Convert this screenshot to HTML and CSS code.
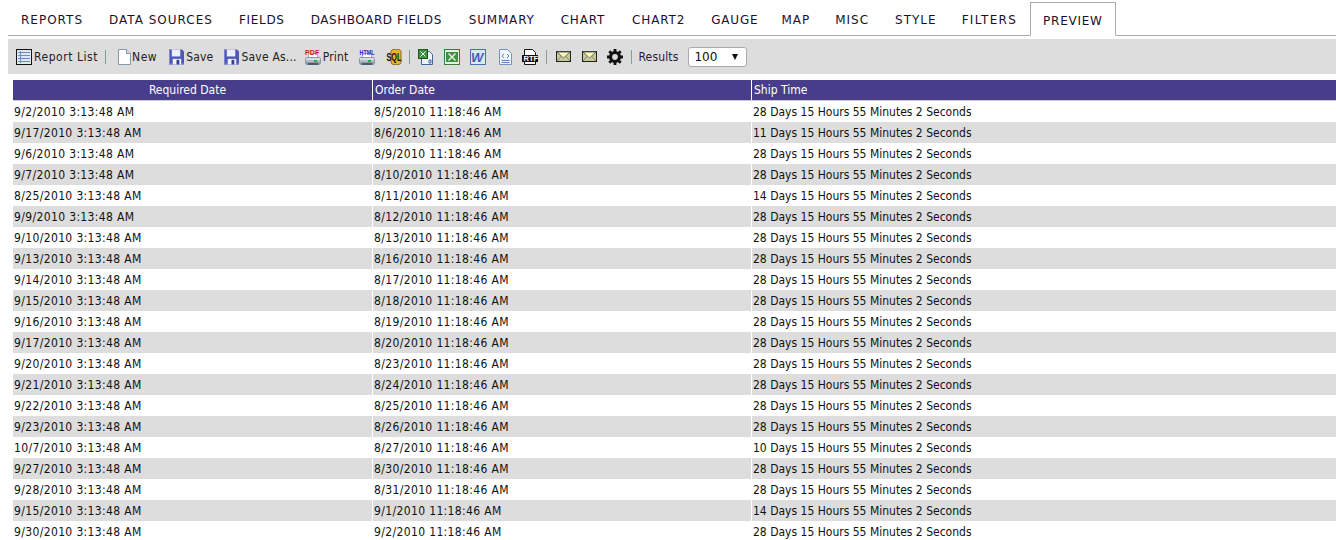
FILE: index.html
```html
<!DOCTYPE html>
<html lang="en">
<head>
<meta charset="UTF-8">
<title>Report Preview</title>
<link rel="stylesheet" href="styles.css">
</head>
<body>
<svg class="defs" width="0" height="0">
  <symbol id="floppy" viewBox="0 0 16 16">
    <path d="M0 0h14l2 2v14H0z" fill="#5058b8"/>
    <path d="M0 0h1v16H0zM0 15h16v1H0z" fill="#7f86d8"/>
    <rect x="3" y="0" width="9" height="7" fill="#eeeef8"/>
    <rect x="3" y="7" width="9" height="1" fill="#9a9ed8"/>
    <rect x="4" y="10" width="9" height="6" fill="#f2f2f2"/>
    <rect x="8" y="11" width="3" height="5" fill="#383e94"/>
  </symbol>
  <symbol id="printer" viewBox="0 0 16 12">
    <rect x="3.500" y=".5" width="9" height="4" fill="#fff" stroke="#a0aab4"/>
    <path d="M1 4h14l1 2v4l-1 2H1l-1-2V6z" fill="#8c99a6"/>
    <rect x="1" y="5" width="14" height="2" fill="#d5dce2"/>
    <rect x="1" y="7" width="14" height="2" fill="#b4bec8"/>
    <rect x="3" y="10" width="10" height="2" fill="#4e5c6a"/>
    <rect x="9" y="7" width="3" height="2" fill="#1fb14a"/>
  </symbol>
  <symbol id="mail" viewBox="0 0 15 11">
    <rect x=".5" y=".5" width="14" height="10" fill="#c9c99a" stroke="#222"/>
    <path d="M1 1l6.500 6L14 1z" fill="#fbfbb8" stroke="#666"/>
    <path d="M1 10l4.500-5M14 10L9.500 5" fill="none" stroke="#8a8a70"/>
  </symbol>
</svg>

<ul class="tabs">
  <li>Reports</li>
  <li>Data Sources</li>
  <li class="tab-fields">Fields</li>
  <li class="tab-dashboard">Dashboard Fields</li>
  <li class="tab-tight">Summary</li>
  <li class="tab-chart">Chart</li>
  <li class="tab-chart2">Chart2</li>
  <li class="tab-gauge">Gauge</li>
  <li class="tab-map">Map</li>
  <li>Misc</li>
  <li class="tab-style">Style</li>
  <li class="tab-filters">Filters</li>
  <li class="active">Preview</li>
</ul>

<div class="toolbar">
  <a class="tool tool-list">
    <svg class="icon" width="16" height="16" viewBox="0 0 16 16">
      <rect x=".5" y=".5" width="15" height="15" fill="#dfe7f2" stroke="#111"/>
      <path d="M2 3.500h12M2 6.500h12M2 9.500h12M2 12.500h12" stroke="#6c8ebf"/>
      <path d="M4.500 2v12" stroke="#6c8ebf"/>
    </svg>Report List</a>
  <span class="sep sep-list"></span>
  <a class="tool tool-new">
    <svg class="icon" width="13" height="16" viewBox="0 0 13 16">
      <path d="M.5.500h8l4 4v11H.5z" fill="#fff" stroke="#8a97aa"/>
      <path d="M8.500.5v4h4" fill="#d5dce8" stroke="#8a97aa"/>
    </svg>New</a>
  <a class="tool tool-save"><svg class="icon" width="15" height="16"><use href="#floppy"/></svg>Save</a>
  <a class="tool tool-saveas"><svg class="icon" width="15" height="16"><use href="#floppy"/></svg>Save As...</a>
  <a class="tool tool-print">
    <svg class="icon" width="16" height="17" viewBox="0 0 16 17">
      <use href="#printer" y="5" width="16" height="12"/>
      <text transform="translate(0 6.500)" class="mini mini-pdf">PDF</text>
    </svg>Print</a>
  <svg class="icon icon-html" width="16" height="17" viewBox="0 0 16 17">
    <use href="#printer" y="5" width="16" height="12"/>
    <text transform="translate(.5 6.500) scale(.77 1)" class="mini mini-html">HTML</text>
  </svg>
  <svg class="icon icon-sql" width="16" height="16" viewBox="0 0 16 16">
    <path d="M5 2.500c0-3 10-3 10 0v11c0 3-10 3-10 0z" fill="#eab52e" stroke="#8a6412"/>
    <text transform="translate(.5 12) scale(.72 1)" class="mini mini-sql">SQL</text>
  </svg>
  <span class="sep sep-sql"></span>
  <svg class="icon icon-xls" width="16" height="16" viewBox="0 0 16 16">
    <path d="M3.500 2.500h8l3 3v10h-11z" fill="#eef3fa" stroke="#43649a"/>
    <rect x=".5" y=".5" width="9" height="9" fill="#3f9142" stroke="#1d5a20"/>
    <path d="M2.500 2.500l5 5M7.500 2.500l-5 5" stroke="#fff"/>
    <path d="M11 11h2v3h-2z" fill="none" stroke="#43649a"/>
  </svg>
  <svg class="icon icon-excel" width="16" height="16" viewBox="0 0 16 16">
    <rect x=".5" y=".5" width="15" height="15" fill="#e6f0e4" stroke="#3d7a3d"/>
    <rect x="2" y="3" width="12" height="10" fill="#3f9142"/>
    <path d="M4.500 4.500l7 7M11.500 4.500l-7 7" stroke="#e6f0e4" stroke-width="1.500"/>
  </svg>
  <svg class="icon icon-word" width="16" height="16" viewBox="0 0 16 16">
    <rect x=".5" y=".5" width="15" height="15" fill="#dce6f6" stroke="#4a6fb5"/>
    <text x="1" y="13" class="mini mini-word">W</text>
  </svg>
  <svg class="icon icon-doc" width="13" height="16" viewBox="0 0 13 16">
    <path d="M.5.500h8l4 4v11H.5z" fill="#f2f6fc" stroke="#7a93bd"/>
    <path d="M5 5L3 7l2 2M8 5l2 2-2 2M2.500 11.500h8M2.500 13.500h8" fill="none" stroke="#5b82c0"/>
  </svg>
  <svg class="icon icon-rtf" width="16" height="16" viewBox="0 0 16 16">
    <path d="M2.500.5h8l3 3v3h-11z" fill="#fff" stroke="#111"/>
    <rect x="0" y="6" width="16" height="7" fill="#111"/>
    <path d="M2.500 13v2.500h11V13" fill="#fff" stroke="#111"/>
    <text x="1.500" y="12.300" class="mini mini-rtf">RTF</text>
  </svg>
  <span class="sep sep-rtf"></span>
  <svg class="icon icon-mail" width="15" height="11"><use href="#mail"/></svg>
  <svg class="icon icon-mail2" width="15" height="11"><use href="#mail"/></svg>
  <svg class="icon icon-gear" width="16" height="16" viewBox="0 0 16 16">
    <path d="M8 3.500a4.500 4.500 0 1 0 0 9 4.500 4.500 0 0 0 0-9z" fill="none" stroke="#111" stroke-width="3.200"/>
    <path d="M8 0v3M8 13v3M0 8h3M13 8h3M2.300 2.300l2.200 2.200M11.500 11.500l2.200 2.200M13.700 2.300l-2.200 2.200M4.500 11.500l-2.200 2.200" stroke="#111" stroke-width="2.800"/>
  </svg>
  <span class="sep sep-gear"></span>
  <span class="results-label">Results</span>
  <span class="results-select">100<i class="arrow"></i></span>
</div>

<table class="report">
  <thead>
    <tr><th class="col-req">Required Date</th><th class="col-order">Order Date</th><th>Ship Time</th></tr>
  </thead>
  <tbody>
    <tr><td class="date">9/2/2010 3:13:48 AM</td><td class="date">8/5/2010 11:18:46 AM</td><td>28 Days 15 Hours 55 Minutes 2 Seconds</td></tr>
    <tr><td class="date">9/17/2010 3:13:48 AM</td><td class="date">8/6/2010 11:18:46 AM</td><td>11 Days 15 Hours 55 Minutes 2 Seconds</td></tr>
    <tr><td class="date">9/6/2010 3:13:48 AM</td><td class="date">8/9/2010 11:18:46 AM</td><td>28 Days 15 Hours 55 Minutes 2 Seconds</td></tr>
    <tr><td class="date">9/7/2010 3:13:48 AM</td><td class="date">8/10/2010 11:18:46 AM</td><td>28 Days 15 Hours 55 Minutes 2 Seconds</td></tr>
    <tr><td class="date">8/25/2010 3:13:48 AM</td><td class="date">8/11/2010 11:18:46 AM</td><td>14 Days 15 Hours 55 Minutes 2 Seconds</td></tr>
    <tr><td class="date">9/9/2010 3:13:48 AM</td><td class="date">8/12/2010 11:18:46 AM</td><td>28 Days 15 Hours 55 Minutes 2 Seconds</td></tr>
    <tr><td class="date">9/10/2010 3:13:48 AM</td><td class="date">8/13/2010 11:18:46 AM</td><td>28 Days 15 Hours 55 Minutes 2 Seconds</td></tr>
    <tr><td class="date">9/13/2010 3:13:48 AM</td><td class="date">8/16/2010 11:18:46 AM</td><td>28 Days 15 Hours 55 Minutes 2 Seconds</td></tr>
    <tr><td class="date">9/14/2010 3:13:48 AM</td><td class="date">8/17/2010 11:18:46 AM</td><td>28 Days 15 Hours 55 Minutes 2 Seconds</td></tr>
    <tr><td class="date">9/15/2010 3:13:48 AM</td><td class="date">8/18/2010 11:18:46 AM</td><td>28 Days 15 Hours 55 Minutes 2 Seconds</td></tr>
    <tr><td class="date">9/16/2010 3:13:48 AM</td><td class="date">8/19/2010 11:18:46 AM</td><td>28 Days 15 Hours 55 Minutes 2 Seconds</td></tr>
    <tr><td class="date">9/17/2010 3:13:48 AM</td><td class="date">8/20/2010 11:18:46 AM</td><td>28 Days 15 Hours 55 Minutes 2 Seconds</td></tr>
    <tr><td class="date">9/20/2010 3:13:48 AM</td><td class="date">8/23/2010 11:18:46 AM</td><td>28 Days 15 Hours 55 Minutes 2 Seconds</td></tr>
    <tr><td class="date">9/21/2010 3:13:48 AM</td><td class="date">8/24/2010 11:18:46 AM</td><td>28 Days 15 Hours 55 Minutes 2 Seconds</td></tr>
    <tr><td class="date">9/22/2010 3:13:48 AM</td><td class="date">8/25/2010 11:18:46 AM</td><td>28 Days 15 Hours 55 Minutes 2 Seconds</td></tr>
    <tr><td class="date">9/23/2010 3:13:48 AM</td><td class="date">8/26/2010 11:18:46 AM</td><td>28 Days 15 Hours 55 Minutes 2 Seconds</td></tr>
    <tr><td class="date">10/7/2010 3:13:48 AM</td><td class="date">8/27/2010 11:18:46 AM</td><td>10 Days 15 Hours 55 Minutes 2 Seconds</td></tr>
    <tr><td class="date">9/27/2010 3:13:48 AM</td><td class="date">8/30/2010 11:18:46 AM</td><td>28 Days 15 Hours 55 Minutes 2 Seconds</td></tr>
    <tr><td class="date">9/28/2010 3:13:48 AM</td><td class="date">8/31/2010 11:18:46 AM</td><td>28 Days 15 Hours 55 Minutes 2 Seconds</td></tr>
    <tr><td class="date">9/15/2010 3:13:48 AM</td><td class="date">9/1/2010 11:18:46 AM</td><td>14 Days 15 Hours 55 Minutes 2 Seconds</td></tr>
    <tr><td class="date">9/30/2010 3:13:48 AM</td><td class="date">9/2/2010 11:18:46 AM</td><td>28 Days 15 Hours 55 Minutes 2 Seconds</td></tr>
  </tbody>
</table>
</body>
</html>
```

FILE: styles.css
```css
html {
  overflow: hidden;
}
body {
  margin: 0 0 0 8px;
  font-family: "DejaVu Sans Condensed", "DejaVu Sans", sans-serif;
  font-size: 12px;
  color: #111;
  background: #fff;
}
.defs {
  position: absolute;
}

.tabs {
  display: flex;
  height: 33px;
  margin: 0;
  padding: 2px 0 0;
  list-style: none;
  border-bottom: 1px solid #aaa;
}
.tabs li {
  padding: 11px 13px 0;
  font-family: "DejaVu Sans", sans-serif;
  font-size: 12px;
  letter-spacing: 1px;
  text-transform: uppercase;
  color: #1a1030;
}
.tabs .tab-fields {
  letter-spacing: .7px;
}
.tabs .tab-dashboard {
  letter-spacing: .55px;
  padding-right: 14px;
}
.tabs .tab-tight {
  letter-spacing: .8px;
}
.tabs .tab-chart {
  letter-spacing: .8px;
  padding-right: 14px;
}
.tabs .tab-chart2 {
  letter-spacing: .85px;
}
.tabs .tab-gauge {
  letter-spacing: .8px;
  margin-right: -3px;
}
.tabs .tab-map {
  margin-right: -1px;
}
.tabs .tab-style {
  margin-right: -1px;
}
.tabs .tab-filters {
  letter-spacing: 1.3px;
}
.tabs .active {
  height: 21px;
  padding-left: 12px;
  padding-right: 12px;
  letter-spacing: .75px;
  background: #fff;
  border: 1px solid #aaa;
  border-bottom: 1px solid #fff;
}

.toolbar {
  display: flex;
  align-items: center;
  height: 35px;
  margin-top: 3px;
  padding-left: 8px;
  background: #ddd;
}
.tool {
  display: flex;
  align-items: center;
  color: #222;
  letter-spacing: .2px;
}
.tool-list {
  letter-spacing: .55px;
}
.tool-new {
  letter-spacing: .5px;
}
.icon {
  flex: none;
  margin-right: 2px;
}
.tool-new .icon { margin-right: 1px; }
.sep {
  width: 1px;
  height: 14px;
  background: #8a9a9a;
}
.sep-list { margin: 0 12px 0 7px; }
.tool-save { margin-left: 12px; }
.tool-saveas { margin-left: 11px; }
.tool-print { margin-left: 8px; }
.icon-html { margin-left: 10px; }
.icon-sql { margin-left: 9px; margin-right: 0; }
.sep-sql { margin: 0 8px 0 7px; }
.icon-excel { margin-left: 8px; }
.icon-word { margin-left: 8px; }
.icon-doc { margin-left: 11px; }
.icon-rtf { margin-left: 8px; }
.sep-rtf { margin: 0 9px 0 6px; }
.icon-mail2 { margin-left: 9px; }
.icon-gear { margin-left: 8px; }
.sep-gear { margin: 0 7px 0 6px; }

.mini {
  font-family: "Liberation Sans", sans-serif;
  font-weight: bold;
}
.mini-pdf { font-size: 7px; fill: #d01818; }
.mini-html { font-size: 7px; fill: #2030d0; }
.mini-sql { font-size: 10px; fill: #111; }
.mini-word { font-size: 13px; font-style: italic; fill: #3a62b0; }
.mini-rtf { font-size: 7.500px; fill: #fff; }

.results-label {
  color: #2a1a40;
  letter-spacing: .15px;
}
.results-select {
  display: flex;
  align-items: center;
  justify-content: space-between;
  box-sizing: border-box;
  width: 59px;
  height: 20px;
  margin-left: 10px;
  padding: 0 8px 0 5px;
  font-family: "DejaVu Sans", sans-serif;
  font-size: 12px;
  background: #fff;
  border: 1px solid #aaa;
  border-radius: 3px;
}
.arrow {
  width: 0;
  height: 0;
  border-left: 3.500px solid transparent;
  border-right: 3.500px solid transparent;
  border-top: 6px solid #111;
}

.report {
  width: calc(100% - 5px);
  margin: 6px 0 0 5px;
  border-collapse: collapse;
  table-layout: fixed;
}
.report th {
  height: 20px;
  padding: 0 2px;
  font-weight: normal;
  text-align: left;
  color: #fff;
  background: #483d8b;
  border-left: 1px solid #fff;
  border-bottom: 1px solid #ccc;
}
.report th:first-child {
  border-left: 0;
}
.report .col-req {
  width: 345px;
  padding-right: 12px;
  text-align: center;
}
.report .col-order {
  width: 374px;
}
.report td {
  height: 21px;
  padding: 0 1px;
  white-space: nowrap;
  border-left: 1px solid #fff;
}
.report td:first-child {
  border-left: 0;
}
.report .date {
  letter-spacing: .36px;
}
.report tbody tr:nth-child(even) {
  background: #ddd;
}
```
